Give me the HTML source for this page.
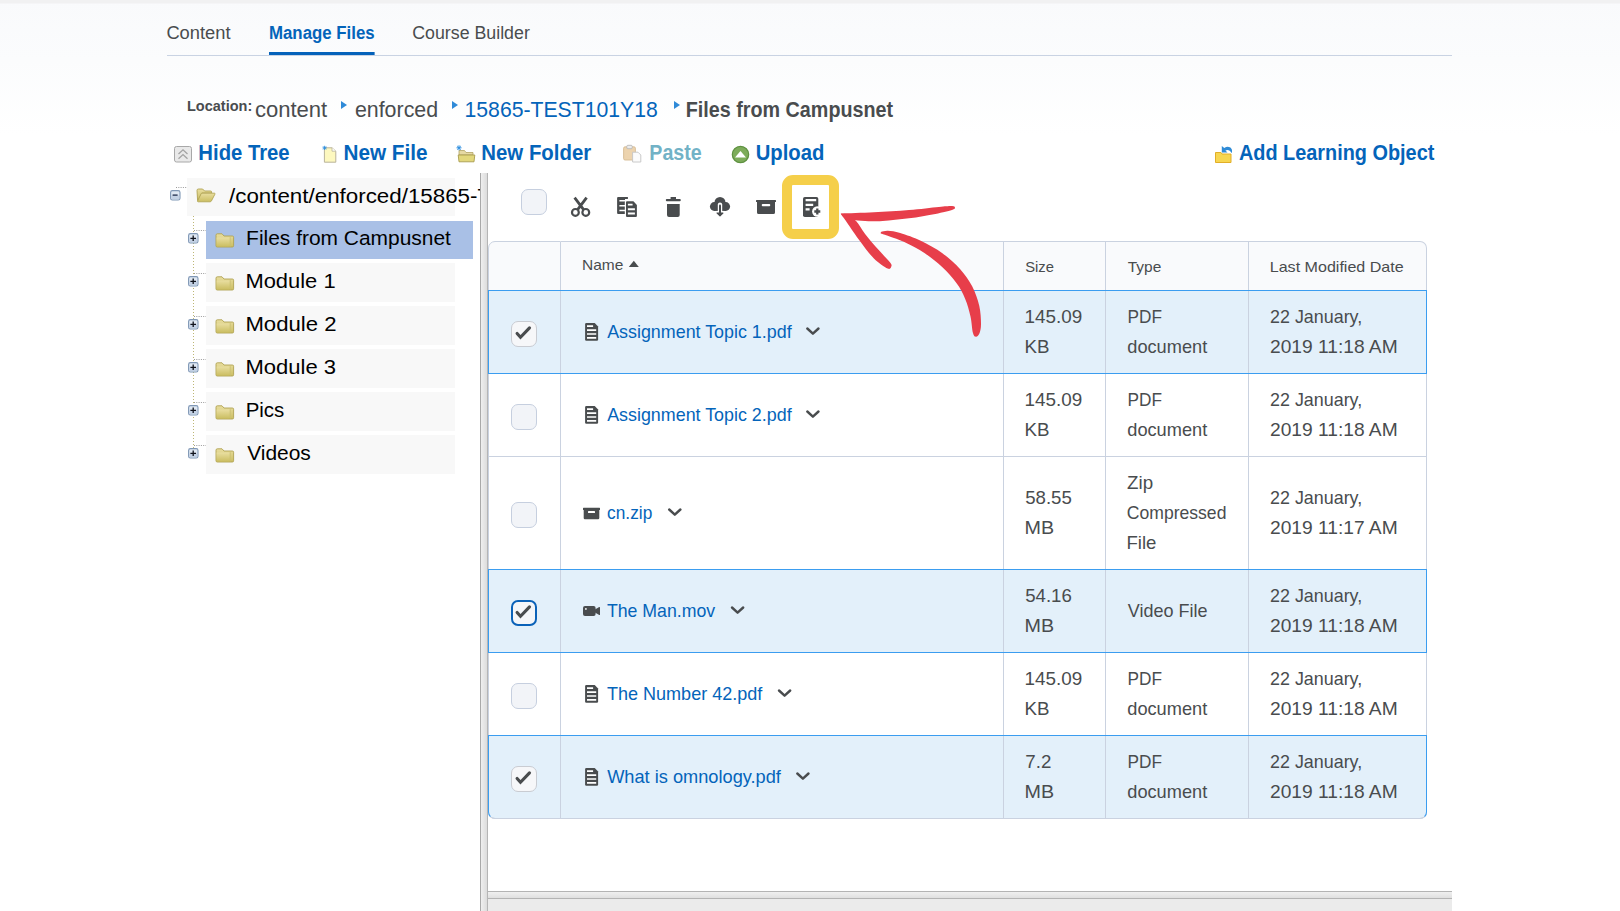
<!DOCTYPE html>
<html lang="en">
<head>
<meta charset="utf-8">
<title>Manage Files</title>
<style>
*{box-sizing:border-box;margin:0;padding:0}
html,body{width:1620px;height:911px;overflow:hidden}
body{position:relative;font-family:"Liberation Sans",sans-serif;color:#494c4e;
 background:linear-gradient(to bottom,#f9fafc 0,#fbfcfd 60px,#ffffff 135px);}
a{text-decoration:none;color:#0464ba}
.abs{position:absolute;white-space:nowrap}
#topbar{position:absolute;left:0;top:0;width:1620px;height:3px;background:#f1f1f2}
#topbar:after{content:"";position:absolute;left:0;top:3px;width:100%;height:1px;background:#f5f5f7}

/* tabs */
#tabs{position:absolute;left:167px;top:4px;width:1285px;height:52px;border-bottom:1px solid #c9d3e3}
#tabs a{position:absolute;top:16px;font-size:18px;line-height:26px;color:#494c4e;white-space:nowrap}
#tabs a.sel{color:#0464ba;font-weight:bold}
#tabs a.sel:after{content:"";position:absolute;left:0;right:0;top:32px;height:3px;background:#0562ba}

/* breadcrumb */
#crumbs{position:absolute;left:0;top:90px;width:1000px;height:40px}
#crumbs .lbl{font-size:15px;font-weight:bold;line-height:20px}
#crumbs .c{font-size:21.6px;line-height:30px}
#crumbs .sep{position:absolute;width:0;height:0;border-left:6.5px solid #2f8ad8;border-top:4.7px solid transparent;border-bottom:4.7px solid transparent;top:10.6px}

/* action bar */
#actions{position:absolute;left:0;top:138px;width:1620px;height:32px}
#actions a{font-size:21.4px;font-weight:bold;line-height:30px;margin-top:0.3px}
#actions a.dis{color:#72b2c6}
#actions svg{position:absolute}

/* tree */
#tree{position:absolute;left:160px;top:173px;width:320px;height:738px;overflow:hidden;color:#000}
#tree ul{list-style:none}
#tree .row{position:absolute;height:38px;background:#f8f8f8}
#tree .row.sel{background:#a9c0e6}
#tree .lab{position:absolute;z-index:2;font-size:20.5px;line-height:38px;white-space:nowrap;top:0}
#tree svg{position:absolute;z-index:2}

/* splitters */
#vsplit{position:absolute;left:480px;top:173px;width:8px;height:738px;border-left:1px solid #a9a9a9;border-right:1px solid #b5b5b5;background:linear-gradient(to right,#efefef,#dcdcdc)}
#hsplit{position:absolute;left:488px;top:891px;width:964px;height:20px;background:#ebebeb;border-top:1px solid #b4b4b4}
#hsplit:before{content:"";position:absolute;left:0;right:0;top:0;height:6px;background:linear-gradient(to bottom,#f0f0f0,#e0e0e0)}
#hsplit:after{content:"";position:absolute;left:0;right:0;top:6px;height:1px;background:#b4b4b4}

/* toolbar */
#tools{position:absolute;left:488px;top:173px;width:964px;height:68px}
#tools svg{position:absolute}
.cb{position:absolute;width:26px;height:26px;border:1px solid #c6cfdf;border-radius:7px;background:#f2f4f8}
.cb.on{border-color:#c9ccd2;background:#f6f7f9}
.cb.focus{border:2px solid #0b62b8;background:#f4f6f9}
.cb svg{position:absolute;left:0;top:0}
#hl{position:absolute;left:782px;top:175px;width:57px;height:64px;border:10px solid #f5cf4a;border-radius:11px}

/* table */
#files{position:absolute;left:488px;top:241px;width:939px;border-collapse:separate;border-spacing:0;font-size:17.7px;line-height:30px;table-layout:fixed}
#files th,#files td{border-right:1px solid #cad2e0;border-bottom:1px solid #cad2e0;text-align:left;font-weight:normal;vertical-align:middle;padding:0 0 0 22px;position:relative}
#files th span{position:relative;top:0.8px}#files th #h1{top:-0.8px}
#files th{background:#f9fafc;height:50px;font-size:15px;border-top:1px solid #cad2e0;line-height:20px}
#files tr>*:first-child{border-left:1px solid #cad2e0;padding:0}
#files th:first-child{border-top-left-radius:7px}
#files th:last-child{border-top-right-radius:7px}
#files tr:last-child td:first-child{border-bottom-left-radius:7px}
#files tr:last-child td:last-child{border-bottom-right-radius:7px}
#files td{height:83px;background:#fff}
#files tr.tall td{height:113px}
#files tr.on td{background:#e3f0fa}
#files td .f{position:relative;top:-0.2px}
#files .nm{position:relative;top:0.2px;display:inline-block;white-space:nowrap;font-size:17.8px}
#files .nm svg{position:absolute}
.selbox{position:absolute;left:488px;width:939px;border:1px solid #3b9df0;pointer-events:none}
.f{display:inline-block;transform-origin:0 50%;white-space:nowrap}
/*FIT*/
#t1{transform:translateX(-0.60px) scaleX(1.0169)}
#t2{transform:translateX(0.00px) scaleX(0.9347)}
#t3{transform:translateX(-0.75px) scaleX(0.9873)}
#b0{transform:translateX(-1.00px) scaleX(0.9667)}
#b1{transform:translateX(-1.10px) scaleX(1.0214)}
#b2{transform:translateX(-1.10px) scaleX(0.9902)}
#b3{transform:translateX(-1.50px) scaleX(0.9820)}
#b4{transform:translateX(-1.25px) scaleX(0.9144)}
#a1{transform:translateX(-1.65px) scaleX(0.9479)}
#a2{transform:translateX(-1.60px) scaleX(0.9698)}
#a3{transform:translateX(-1.70px) scaleX(0.9533)}
#a4{transform:translateX(-1.70px) scaleX(0.9178)}
#a5{transform:translateX(-1.30px) scaleX(0.9470)}
#a6{transform:translateX(-1.00px) scaleX(0.9284)}
#r1{transform:translateX(-1.90px) scaleX(1.0214)}
#r2{transform:translateX(-2.60px) scaleX(1.0693)}
#r3{transform:translateX(-2.60px) scaleX(1.0798)}
#r4{transform:translateX(-2.60px) scaleX(1.0746)}
#r5{transform:translateX(-2.35px) scaleX(0.9973)}
#r6{transform:translateX(-0.85px) scaleX(1.0212)}
#h1{transform:translateX(-1.00px) scaleX(1.0329)}
#h2{transform:translateX(-0.80px) scaleX(0.9875)}
#h3{transform:translateX(-0.25px) scaleX(1.0317)}
#h4{transform:translateX(-1.25px) scaleX(1.0710)}
#n1{transform:translateX(24.15px) scaleX(1.0052)}
#n2{transform:translateX(24.15px) scaleX(1.0052)}
#n3{transform:translateX(24.10px) scaleX(0.9719)}
#n4{transform:translateX(23.90px) scaleX(0.9963)}
#n5{transform:translateX(23.90px) scaleX(1.0147)}
#n6{transform:translateX(24.15px) scaleX(1.0242)}
#s1a{transform:translateX(-1.55px) scaleX(1.0664)}
#s2a{transform:translateX(-1.55px) scaleX(1.0664)}
#s5a{transform:translateX(-1.55px) scaleX(1.0664)}
#s6a{transform:translateX(-0.65px) scaleX(1.0594)}
#s1b{transform:translateX(-1.40px) scaleX(1.0588)}
#s2b{transform:translateX(-1.40px) scaleX(1.0588)}
#s5b{transform:translateX(-1.40px) scaleX(1.0588)}
#s3a{transform:translateX(-0.80px) scaleX(1.0538)}
#s4a{transform:translateX(-0.80px) scaleX(1.0538)}
#s3b{transform:translateX(-1.40px) scaleX(1.1147)}
#s4b{transform:translateX(-1.40px) scaleX(1.1147)}
#s6b{transform:translateX(-1.40px) scaleX(1.1147)}
#y1a{transform:translateX(-0.50px) scaleX(0.9744)}
#y1b{transform:translateX(-0.75px) scaleX(1.0293)}
#y2a{transform:translateX(-0.50px) scaleX(0.9744)}
#y2b{transform:translateX(-0.75px) scaleX(1.0293)}
#y5a{transform:translateX(-0.50px) scaleX(0.9744)}
#y5b{transform:translateX(-0.75px) scaleX(1.0293)}
#y6a{transform:translateX(-0.50px) scaleX(0.9744)}
#y6b{transform:translateX(-0.75px) scaleX(1.0293)}
#y3a{transform:translateX(-0.95px) scaleX(1.0603)}
#y3b{transform:translateX(-1.20px) scaleX(0.9934)}
#y3c{transform:translateX(-1.50px) scaleX(1.0514)}
#y4a{transform:translateX(-0.25px) scaleX(1.0175)}
#d1a{transform:translateX(-1.00px) scaleX(1.0119)}
#d1b{transform:translateX(-1.00px) scaleX(1.0846)}
#d2a{transform:translateX(-1.00px) scaleX(1.0119)}
#d2b{transform:translateX(-1.00px) scaleX(1.0846)}
#d3a{transform:translateX(-1.00px) scaleX(1.0119)}
#d3b{transform:translateX(-1.00px) scaleX(1.0846)}
#d4a{transform:translateX(-1.00px) scaleX(1.0119)}
#d4b{transform:translateX(-1.00px) scaleX(1.0846)}
#d5a{transform:translateX(-1.00px) scaleX(1.0119)}
#d5b{transform:translateX(-1.00px) scaleX(1.0846)}
#d6a{transform:translateX(-1.00px) scaleX(1.0119)}
#d6b{transform:translateX(-1.00px) scaleX(1.0846)}
/*ENDFIT*/
</style>
</head>
<body>
<div id="topbar"></div>

<nav id="tabs">
 <a class="f" id="t1" style="left:0px">Content</a>
 <a id="t2" class="f sel" style="left:102px">Manage Files</a>
 <a class="f" id="t3" style="left:246px">Course Builder</a>
</nav>

<div id="crumbs">
 <span id="b0" class="f abs lbl" style="left:188px;top:6.4px">Location:</span>
 <span id="b1" class="f abs c" style="left:256px;top:4.8px">content</span>
 <i class="sep" style="left:341px"></i>
 <span id="b2" class="f abs c" style="left:356px;top:4.8px">enforced</span>
 <i class="sep" style="left:452px"></i>
 <a id="b3" class="f abs c" style="left:466px;top:4.8px">15865-TEST101Y18</a>
 <i class="sep" style="left:674px"></i>
 <span id="b4" class="f abs c" style="left:687px;top:4.8px;font-weight:bold">Files from Campusnet</span>
</div>

<div id="actions">
 
 <svg style="left:174px;top:8px" width="18" height="17" viewBox="0 0 18 17"><rect x="0.5" y="0.5" width="17" height="15.5" rx="2" fill="#e9e9e9" stroke="#a8a8a8"/><path d="M4.5 8 L9 3.8 L13.5 8 M4.5 12.8 L9 8.6 L13.5 12.8" fill="none" stroke="#a3a3a3" stroke-width="1.3"/></svg>
 <svg style="left:321px;top:7px" width="16" height="18" viewBox="0 0 16 18"><path d="M3.4 2.8 H11 L14.8 6.2 V17.2 H3.4 Z" fill="#fdf8bf" stroke="#b9b39a" stroke-width="1"/><path d="M11 2.8 V6.2 H14.8" fill="#fff" stroke="#b9b39a" stroke-width="0.8"/><path d="M3.6 0.8 V5 M1.5 2.9 H5.7 M2.1 1.4 L5.1 4.4 M5.1 1.4 L2.1 4.4" stroke="#2f8fe0" stroke-width="0.9"/></svg>
 <svg style="left:456px;top:7px" width="20" height="18" viewBox="0 0 20 18"><path d="M3 5.5 H8.5 L10 7.5 H17 V10 H3 Z" fill="#e6d9a3" stroke="#b3a565" stroke-width="0.8"/><path d="M2.2 10 H18.8 L18 16.8 H3 Z" fill="#e2d77c" stroke="#a89c4e" stroke-width="0.9"/><path d="M3 0.3 V5.3 M0.5 2.8 H5.5 M1.2 1 L4.8 4.6 M4.8 1 L1.2 4.6" stroke="#2f8fe0" stroke-width="1"/></svg>
 <svg style="left:622px;top:6px" width="20" height="19" viewBox="0 0 20 19"><rect x="1.6" y="2.8" width="11.8" height="13.2" rx="1.5" fill="#ecd3ae" stroke="#d6bb93" stroke-width="0.9"/><rect x="4.8" y="1.3" width="5.4" height="3.4" rx="1" fill="#ececec" stroke="#b3b3b3" stroke-width="0.8"/><path d="M10.6 8.2 H16 L18.8 11 V18 H10.6 Z" fill="#fbfbfb" stroke="#c4c4c4" stroke-width="0.9"/></svg>
 <svg style="left:731px;top:7px" width="19" height="19" viewBox="0 0 19 19"><circle cx="9.5" cy="9.5" r="8.2" fill="#7dac5a" stroke="#5e9140" stroke-width="1.2"/><path d="M4 12.5 L9.5 6 L15 12.5 Z" fill="#fff"/></svg>
 <svg style="left:1214px;top:7px" width="20" height="19" viewBox="0 0 20 19"><path d="M1.5 7.5 H7 L8 9 H17 V17.5 H1.5 Z" fill="#f7d650" stroke="#e2ae27" stroke-width="1"/><path d="M7.8 1 V7.6 H13.5 L11.4 5.6 C13.5 4.3 16 5 17.6 8.3 C19.6 3.5 15 0 10.3 2.9 Z" fill="#2f8bd6"/></svg>
 <a id="a1" class="f abs" style="left:200px;top:0">Hide Tree</a>
 <a id="a2" class="f abs" style="left:345px;top:0">New File</a>
 <a id="a3" class="f abs" style="left:483px;top:0">New Folder</a>
 <a id="a4" class="f abs dis" style="left:651px;top:0">Paste</a>
 <a id="a5" class="f abs" style="left:757px;top:0">Upload</a>
 <a id="a6" class="f abs" style="left:1240px;top:0">Add Learning Object</a>
</div>

<svg width="0" height="0" style="position:absolute"><defs><linearGradient id="fg" x1="0" y1="0" x2="0" y2="1"><stop offset="0" stop-color="#e9dea0"/><stop offset="1" stop-color="#cbbe62"/></linearGradient></defs></svg>
<div id="tree">
 <svg style="left:0;top:0" width="320" height="738" viewBox="0 0 320 738" fill="none"><path d="M16 14.5 H27" stroke="#9a9a9a" stroke-width="1" stroke-dasharray="1 1.3"/><path d="M33.5 43 V281" stroke="#bdb675" stroke-width="1" stroke-dasharray="1 2"/><path d="M34 57.5 H46" stroke="#9a9a9a" stroke-width="1" stroke-dasharray="1 1.3"/><path d="M34 100.5 H46" stroke="#9a9a9a" stroke-width="1" stroke-dasharray="1 1.3"/><path d="M34 143.5 H46" stroke="#9a9a9a" stroke-width="1" stroke-dasharray="1 1.3"/><path d="M34 186.5 H46" stroke="#9a9a9a" stroke-width="1" stroke-dasharray="1 1.3"/><path d="M34 229.5 H46" stroke="#9a9a9a" stroke-width="1" stroke-dasharray="1 1.3"/><path d="M34 272.5 H46" stroke="#9a9a9a" stroke-width="1" stroke-dasharray="1 1.3"/></svg>
<svg style="left:10px;top:17px" width="11" height="11" viewBox="0 0 11 11"><rect x="0.6" y="0.6" width="9.4" height="9.4" rx="1.8" fill="#dfe8f3" stroke="#7f97b5" stroke-width="1.1"/><rect x="1.4" y="5.3" width="7.8" height="3.9" rx="1" fill="#c3d1e4"/><path d="M2.6 5.1 H7.6" stroke="#1c2a4a" stroke-width="1.3"/></svg><svg style="left:36px;top:15px" width="20" height="15" viewBox="0 0 20 15"><path d="M1 2.4 Q1 1 2.4 1 H6.6 L8.6 3 H14.6 Q15.6 3 15.6 4 V5 H6 L1.6 12.6 Z" fill="url(#fg)" stroke="#b0a352" stroke-width="0.9"/><path d="M5.4 5.2 H18.4 Q19.4 5.2 18.9 6.2 L15.4 13 Q15 13.8 14 13.8 H2.2 Q1.2 13.8 1.7 12.8 Z" fill="url(#fg)" stroke="#b3a757" stroke-width="0.9"/></svg><svg style="left:28px;top:60px" width="11" height="11" viewBox="0 0 11 11"><rect x="0.6" y="0.6" width="9.4" height="9.4" rx="1.8" fill="#dfe8f3" stroke="#7f97b5" stroke-width="1.1"/><rect x="1.4" y="5.3" width="7.8" height="3.9" rx="1" fill="#c3d1e4"/><path d="M2.4 5.3 H8 M5.2 2.5 V8.1" stroke="#10131c" stroke-width="1.3"/></svg><svg style="left:55px;top:60px" width="20" height="15" viewBox="0 0 20 15"><path d="M1 2.2 Q1 0.8 2.4 0.8 H7 L9 3 H17.4 Q18.6 3 18.6 4.2 V12.8 Q18.6 14 17.4 14 H2.2 Q1 14 1 12.8 Z" fill="url(#fg)" stroke="#b0a352" stroke-width="0.9"/><path d="M1.6 4.6 H14.5 V13.5 H2.2 Q1.6 13.5 1.6 12.8 Z" fill="url(#fg)"/><path d="M15.3 4.2 V13.6" stroke="#c9be72" stroke-width="0.7"/></svg><svg style="left:28px;top:103px" width="11" height="11" viewBox="0 0 11 11"><rect x="0.6" y="0.6" width="9.4" height="9.4" rx="1.8" fill="#dfe8f3" stroke="#7f97b5" stroke-width="1.1"/><rect x="1.4" y="5.3" width="7.8" height="3.9" rx="1" fill="#c3d1e4"/><path d="M2.4 5.3 H8 M5.2 2.5 V8.1" stroke="#10131c" stroke-width="1.3"/></svg><svg style="left:55px;top:103px" width="20" height="15" viewBox="0 0 20 15"><path d="M1 2.2 Q1 0.8 2.4 0.8 H7 L9 3 H17.4 Q18.6 3 18.6 4.2 V12.8 Q18.6 14 17.4 14 H2.2 Q1 14 1 12.8 Z" fill="url(#fg)" stroke="#b0a352" stroke-width="0.9"/><path d="M1.6 4.6 H14.5 V13.5 H2.2 Q1.6 13.5 1.6 12.8 Z" fill="url(#fg)"/><path d="M15.3 4.2 V13.6" stroke="#c9be72" stroke-width="0.7"/></svg><svg style="left:28px;top:146px" width="11" height="11" viewBox="0 0 11 11"><rect x="0.6" y="0.6" width="9.4" height="9.4" rx="1.8" fill="#dfe8f3" stroke="#7f97b5" stroke-width="1.1"/><rect x="1.4" y="5.3" width="7.8" height="3.9" rx="1" fill="#c3d1e4"/><path d="M2.4 5.3 H8 M5.2 2.5 V8.1" stroke="#10131c" stroke-width="1.3"/></svg><svg style="left:55px;top:146px" width="20" height="15" viewBox="0 0 20 15"><path d="M1 2.2 Q1 0.8 2.4 0.8 H7 L9 3 H17.4 Q18.6 3 18.6 4.2 V12.8 Q18.6 14 17.4 14 H2.2 Q1 14 1 12.8 Z" fill="url(#fg)" stroke="#b0a352" stroke-width="0.9"/><path d="M1.6 4.6 H14.5 V13.5 H2.2 Q1.6 13.5 1.6 12.8 Z" fill="url(#fg)"/><path d="M15.3 4.2 V13.6" stroke="#c9be72" stroke-width="0.7"/></svg><svg style="left:28px;top:189px" width="11" height="11" viewBox="0 0 11 11"><rect x="0.6" y="0.6" width="9.4" height="9.4" rx="1.8" fill="#dfe8f3" stroke="#7f97b5" stroke-width="1.1"/><rect x="1.4" y="5.3" width="7.8" height="3.9" rx="1" fill="#c3d1e4"/><path d="M2.4 5.3 H8 M5.2 2.5 V8.1" stroke="#10131c" stroke-width="1.3"/></svg><svg style="left:55px;top:189px" width="20" height="15" viewBox="0 0 20 15"><path d="M1 2.2 Q1 0.8 2.4 0.8 H7 L9 3 H17.4 Q18.6 3 18.6 4.2 V12.8 Q18.6 14 17.4 14 H2.2 Q1 14 1 12.8 Z" fill="url(#fg)" stroke="#b0a352" stroke-width="0.9"/><path d="M1.6 4.6 H14.5 V13.5 H2.2 Q1.6 13.5 1.6 12.8 Z" fill="url(#fg)"/><path d="M15.3 4.2 V13.6" stroke="#c9be72" stroke-width="0.7"/></svg><svg style="left:28px;top:232px" width="11" height="11" viewBox="0 0 11 11"><rect x="0.6" y="0.6" width="9.4" height="9.4" rx="1.8" fill="#dfe8f3" stroke="#7f97b5" stroke-width="1.1"/><rect x="1.4" y="5.3" width="7.8" height="3.9" rx="1" fill="#c3d1e4"/><path d="M2.4 5.3 H8 M5.2 2.5 V8.1" stroke="#10131c" stroke-width="1.3"/></svg><svg style="left:55px;top:232px" width="20" height="15" viewBox="0 0 20 15"><path d="M1 2.2 Q1 0.8 2.4 0.8 H7 L9 3 H17.4 Q18.6 3 18.6 4.2 V12.8 Q18.6 14 17.4 14 H2.2 Q1 14 1 12.8 Z" fill="url(#fg)" stroke="#b0a352" stroke-width="0.9"/><path d="M1.6 4.6 H14.5 V13.5 H2.2 Q1.6 13.5 1.6 12.8 Z" fill="url(#fg)"/><path d="M15.3 4.2 V13.6" stroke="#c9be72" stroke-width="0.7"/></svg><svg style="left:28px;top:275px" width="11" height="11" viewBox="0 0 11 11"><rect x="0.6" y="0.6" width="9.4" height="9.4" rx="1.8" fill="#dfe8f3" stroke="#7f97b5" stroke-width="1.1"/><rect x="1.4" y="5.3" width="7.8" height="3.9" rx="1" fill="#c3d1e4"/><path d="M2.4 5.3 H8 M5.2 2.5 V8.1" stroke="#10131c" stroke-width="1.3"/></svg><svg style="left:55px;top:275px" width="20" height="15" viewBox="0 0 20 15"><path d="M1 2.2 Q1 0.8 2.4 0.8 H7 L9 3 H17.4 Q18.6 3 18.6 4.2 V12.8 Q18.6 14 17.4 14 H2.2 Q1 14 1 12.8 Z" fill="url(#fg)" stroke="#b0a352" stroke-width="0.9"/><path d="M1.6 4.6 H14.5 V13.5 H2.2 Q1.6 13.5 1.6 12.8 Z" fill="url(#fg)"/><path d="M15.3 4.2 V13.6" stroke="#c9be72" stroke-width="0.7"/></svg>
 <ul>
  <li><div class="row" style="left:27px;top:5px;width:268px"></div><span id="r0" class="f lab" style="left:68.8px;top:4px;transform:scaleX(1.09)">/content/enforced/15865-TEST101Y18</span>
   <ul>
    <li><div class="row sel" style="left:46px;top:48px;width:267px"></div><span id="r1" class="f lab" style="left:88px;top:46.4px">Files from Campusnet</span></li>
    <li><div class="row" style="left:46px;top:90px;width:249px;height:39px"></div><span id="r2" class="f lab" style="left:88px;top:89.4px">Module 1</span></li>
    <li><div class="row" style="left:46px;top:133px;width:249px;height:39px"></div><span id="r3" class="f lab" style="left:88px;top:132.4px">Module 2</span></li>
    <li><div class="row" style="left:46px;top:176px;width:249px;height:39px"></div><span id="r4" class="f lab" style="left:88px;top:175.4px">Module 3</span></li>
    <li><div class="row" style="left:46px;top:219px;width:249px;height:39px"></div><span id="r5" class="f lab" style="left:88px;top:218.4px">Pics</span></li>
    <li><div class="row" style="left:46px;top:262px;width:249px;height:39px"></div><span id="r6" class="f lab" style="left:88px;top:261.4px">Videos</span></li>
   </ul>
  </li>
 </ul>
</div>

<div id="vsplit"></div>

<div id="tools">
 <span class="cb" style="left:33px;top:16px"></span>
 <svg style="left:82px;top:23px" width="22" height="22" viewBox="0 0 22 22"><g fill="none" stroke="#494c4e"><circle cx="5.4" cy="16.4" r="3.4" stroke-width="2.2"/><circle cx="15.8" cy="16.4" r="3.4" stroke-width="2.2"/><path d="M7.6 13.6 L16.6 1.6 M13.6 13.6 L4.6 1.6" stroke-width="2.8"/></g></svg>
 <svg style="left:128px;top:23px" width="22" height="22" viewBox="0 0 22 22"><path d="M2.1 0.9 H11.9 V3 H9 V17.9 H2.1 Q1.1 17.9 1.1 16.9 V1.9 Q1.1 0.9 2.1 0.9 Z" fill="#494c4e"/><path d="M3.4 4.7 H9 M3.4 9.7 H9 M3.4 14.4 H9" stroke="#fff" stroke-width="1.5"/><path d="M10 6.2 Q10 5.2 11 5.2 H17.4 L20.9 9 V19.9 Q20.9 20.9 19.9 20.9 H11 Q10 20.9 10 19.9 Z" fill="#494c4e" stroke="#fff" stroke-width="2.4" paint-order="stroke"/><path d="M11.9 8.6 H16.6 M11.9 13.2 H18.9 M11.9 17.5 H18.9" stroke="#fff" stroke-width="1.9"/></svg>
 <svg style="left:177px;top:23px" width="17" height="22" viewBox="0 0 17 22"><path d="M5.6 1 H11 V3 H5.6 Z M1.8 2.9 H14.8 Q15.8 2.9 15.8 3.9 Q15.8 5.2 14.8 5.2 H1.8 Q0.8 5.2 0.8 3.9 Q0.8 2.9 1.8 2.9 Z M2 8 H14.7 V19 Q14.7 21 12.7 21 H4 Q2 21 2 19 Z" fill="#494c4e"/></svg>
 <svg style="left:221px;top:23px" width="22" height="22" viewBox="0 0 22 22"><circle cx="5.3" cy="10.5" r="4.4" fill="#494c4e"/><circle cx="16.7" cy="10.5" r="4.4" fill="#494c4e"/><circle cx="11" cy="6.5" r="5.5" fill="#494c4e"/><rect x="5" y="9" width="12" height="5.9" fill="#494c4e"/><path d="M11 8.6 V16.5" stroke="#fff" stroke-width="4.4" stroke-linecap="round"/><path d="M11 9.4 V17" stroke="#494c4e" stroke-width="2" stroke-linecap="round"/><path d="M8.1 17 H13.9 L11 19.9 Z" fill="#494c4e" stroke="#494c4e" stroke-width="1.2" stroke-linejoin="round"/></svg>
 <svg style="left:267px;top:26px" width="22" height="16" viewBox="0 0 22 16"><path d="M1.6 1 H20.4 Q21 1 21 1.6 V2.4 Q21 3 20.4 3 H20 V13.4 Q20 15 18.4 15 H3.6 Q2 15 2 13.4 V3 H1.6 Q1 3 1 2.4 V1.6 Q1 1 1.6 1 Z" fill="#494c4e"/><rect x="6.8" y="4.9" width="8.4" height="2.3" rx="0.8" fill="#fff"/></svg>
 <svg style="left:314px;top:23px" width="21" height="22" viewBox="0 0 21 22"><rect x="1" y="1" width="15.3" height="20" rx="1.8" fill="#494c4e"/><path d="M3.6 4.1 H14.2 M3.6 8.9 H11.2 M3.6 13.3 H7.6" stroke="#fff" stroke-width="2.3"/><circle cx="15.3" cy="15.5" r="5.2" fill="#fff"/><path d="M12.3 15.5 H18.3 M15.3 12.5 V18.5" stroke="#494c4e" stroke-width="2.3"/></svg>

</div>
<div id="hl"></div>

<table id="files">
 <colgroup><col style="width:73px"><col style="width:443px"><col style="width:102px"><col style="width:143px"><col style="width:178px"></colgroup>
 <thead>
  <tr><th></th><th><span class="f" id="h1">Name</span></th><th><span class="f" id="h2">Size</span></th><th><span class="f" id="h3">Type</span></th><th><span class="f" id="h4">Last Modified Date</span></th></tr>
 </thead>
 <tbody>
  <tr class="on"><td><span class="cb on" style="left:22px;top:30px"></span></td><td><a class="f nm" id="n1">Assignment Topic 1.pdf</a></td><td><span class="f" id="s1a">145.09</span><br><span class="f" id="s1b">KB</span></td><td><span class="f" id="y1a">PDF</span><br><span class="f" id="y1b">document</span></td><td><span class="f" id="d1a">22 January,</span><br><span class="f" id="d1b">2019 11:18 AM</span></td></tr>
  <tr><td><span class="cb" style="left:22px;top:30px"></span></td><td><a class="f nm" id="n2">Assignment Topic 2.pdf</a></td><td><span class="f" id="s2a">145.09</span><br><span class="f" id="s2b">KB</span></td><td><span class="f" id="y2a">PDF</span><br><span class="f" id="y2b">document</span></td><td><span class="f" id="d2a">22 January,</span><br><span class="f" id="d2b">2019 11:18 AM</span></td></tr>
  <tr class="tall"><td><span class="cb" style="left:22px;top:45px"></span></td><td><a class="f nm" id="n3">cn.zip</a></td><td><span class="f" id="s3a">58.55</span><br><span class="f" id="s3b">MB</span></td><td><span class="f" id="y3a">Zip</span><br><span class="f" id="y3b">Compressed</span><br><span class="f" id="y3c">File</span></td><td><span class="f" id="d3a">22 January,</span><br><span class="f" id="d3b">2019 11:17 AM</span></td></tr>
  <tr class="on"><td><span class="cb focus" style="left:22px;top:30px"></span></td><td><a class="f nm" id="n4">The Man.mov</a></td><td><span class="f" id="s4a">54.16</span><br><span class="f" id="s4b">MB</span></td><td><span class="f" id="y4a">Video File</span></td><td><span class="f" id="d4a">22 January,</span><br><span class="f" id="d4b">2019 11:18 AM</span></td></tr>
  <tr><td><span class="cb" style="left:22px;top:30px"></span></td><td><a class="f nm" id="n5">The Number 42.pdf</a></td><td><span class="f" id="s5a">145.09</span><br><span class="f" id="s5b">KB</span></td><td><span class="f" id="y5a">PDF</span><br><span class="f" id="y5b">document</span></td><td><span class="f" id="d5a">22 January,</span><br><span class="f" id="d5b">2019 11:18 AM</span></td></tr>
  <tr class="on"><td><span class="cb on" style="left:22px;top:30px"></span></td><td><a class="f nm" id="n6">What is omnology.pdf</a></td><td><span class="f" id="s6a">7.2</span><br><span class="f" id="s6b">MB</span></td><td><span class="f" id="y6a">PDF</span><br><span class="f" id="y6b">document</span></td><td><span class="f" id="d6a">22 January,</span><br><span class="f" id="d6b">2019 11:18 AM</span></td></tr>
 </tbody>
</table>
<div class="selbox" style="top:290px;height:84px"></div>
<div class="selbox" style="top:569px;height:84px"></div>
<div class="selbox" style="top:735px;height:84px;border-bottom-color:#cad2e0;border-radius:0 0 7px 7px"></div>

<svg id="ticons" style="position:absolute;left:0;top:0;pointer-events:none" width="1620" height="911" viewBox="0 0 1620 911"><g transform="translate(585.1 323.1)"><path d="M1.2 0 H9.6 L13 3.5 V16.4 Q13 17.6 11.8 17.6 H1.2 Q0 17.6 0 16.4 V1.2 Q0 0 1.2 0 Z" fill="#494c4e"/><path d="M1.9 3.1 H8 M1.9 7 H11.1 M1.9 10.9 H11.1 M1.9 14.8 H11.1" stroke="#fff" stroke-width="1.7"/></g><g transform="translate(585.1 406.1)"><path d="M1.2 0 H9.6 L13 3.5 V16.4 Q13 17.6 11.8 17.6 H1.2 Q0 17.6 0 16.4 V1.2 Q0 0 1.2 0 Z" fill="#494c4e"/><path d="M1.9 3.1 H8 M1.9 7 H11.1 M1.9 10.9 H11.1 M1.9 14.8 H11.1" stroke="#fff" stroke-width="1.7"/></g><g transform="translate(583 507.8)"><path d="M0.5 0 H16.5 Q17 0 17 0.5 V1.6 Q17 2.1 16.5 2.1 H16.3 V10.3 Q16.3 11.5 15.1 11.5 H1.9 Q0.7 11.5 0.7 10.3 V2.1 H0.5 Q0 2.1 0 1.6 V0.5 Q0 0 0.5 0 Z" fill="#494c4e"/><rect x="5" y="3.3" width="7" height="1.9" rx="0.6" fill="#fff"/></g><g transform="translate(583 606.0)"><rect x="0" y="0" width="12.6" height="10" rx="2" fill="#494c4e"/><path d="M12 3.6 L16.2 1 Q17 0.6 17 1.5 V8.5 Q17 9.4 16.2 9 L12 6.4 Z" fill="#494c4e"/><circle cx="2.9" cy="2.9" r="0.9" fill="#fff"/></g><g transform="translate(585.1 685.1)"><path d="M1.2 0 H9.6 L13 3.5 V16.4 Q13 17.6 11.8 17.6 H1.2 Q0 17.6 0 16.4 V1.2 Q0 0 1.2 0 Z" fill="#494c4e"/><path d="M1.9 3.1 H8 M1.9 7 H11.1 M1.9 10.9 H11.1 M1.9 14.8 H11.1" stroke="#fff" stroke-width="1.7"/></g><g transform="translate(585.1 768.1)"><path d="M1.2 0 H9.6 L13 3.5 V16.4 Q13 17.6 11.8 17.6 H1.2 Q0 17.6 0 16.4 V1.2 Q0 0 1.2 0 Z" fill="#494c4e"/><path d="M1.9 3.1 H8 M1.9 7 H11.1 M1.9 10.9 H11.1 M1.9 14.8 H11.1" stroke="#fff" stroke-width="1.7"/></g><path d="M807.3 328.5 L812.9 333.7 L818.5 328.5" fill="none" stroke="#494c4e" stroke-width="2.4" stroke-linecap="round" stroke-linejoin="round"/><path d="M807.3 411.5 L812.9 416.7 L818.5 411.5" fill="none" stroke="#494c4e" stroke-width="2.4" stroke-linecap="round" stroke-linejoin="round"/><path d="M669.2 509.5 L674.8 514.7 L680.4 509.5" fill="none" stroke="#494c4e" stroke-width="2.4" stroke-linecap="round" stroke-linejoin="round"/><path d="M732.0 607.5 L737.6 612.7 L743.2 607.5" fill="none" stroke="#494c4e" stroke-width="2.4" stroke-linecap="round" stroke-linejoin="round"/><path d="M779.0 690.5 L784.6 695.7 L790.2 690.5" fill="none" stroke="#494c4e" stroke-width="2.4" stroke-linecap="round" stroke-linejoin="round"/><path d="M797.3 773.5 L802.9 778.7 L808.5 773.5" fill="none" stroke="#494c4e" stroke-width="2.4" stroke-linecap="round" stroke-linejoin="round"/><path d="M517.1 333.4 L520.5 337.3 L529.5 327.9" fill="none" stroke="#494c4e" stroke-width="3.1" stroke-linecap="round" stroke-linejoin="miter"/><path d="M517.1 612.4 L520.5 616.3 L529.5 606.9" fill="none" stroke="#494c4e" stroke-width="3.1" stroke-linecap="round" stroke-linejoin="miter"/><path d="M517.1 778.4 L520.5 782.3 L529.5 772.9" fill="none" stroke="#494c4e" stroke-width="3.1" stroke-linecap="round" stroke-linejoin="miter"/><path d="M628.8 267 L633.8 260.8 L638.8 267 Z" fill="#494c4e"/></svg>
<div id="hsplit"></div>
<svg id="arrow" style="position:absolute;left:0;top:0;pointer-events:none" width="1620" height="911" viewBox="0 0 1620 911" fill="#e73e4a">
<path d="M841.6 213.5C847.0 213.3 862.7 212.9 873.9 212.3C885.1 211.7 898.2 210.9 909.0 210.0C919.9 209.1 931.7 207.5 938.9 206.9C946.1 206.2 949.4 205.9 952.1 206.0C954.7 206.1 954.8 206.9 954.9 207.6C955.0 208.2 955.8 208.6 952.6 209.7C949.3 210.7 942.6 212.5 935.4 213.9C928.1 215.3 917.8 217.1 909.0 218.3C900.2 219.4 890.0 220.4 882.7 220.9C875.4 221.4 870.4 221.4 865.1 221.1C859.9 220.8 855.0 220.2 851.1 219.2C847.2 218.1 843.2 215.5 841.6 214.6C840.0 213.7 841.6 213.7 841.6 213.5Z"/>
<path d="M841.6 213.5C842.9 214.0 846.9 215.1 849.3 216.3C851.8 217.6 853.7 218.3 856.3 221.3C859.0 224.2 861.3 229.0 865.1 233.9C868.9 238.8 875.0 245.8 879.2 250.6C883.3 255.3 888.0 259.7 890.1 262.4C892.1 265.0 891.7 265.5 891.3 266.6C890.9 267.6 890.5 269.8 887.6 268.5C884.7 267.2 878.5 263.1 873.9 258.5C869.3 253.9 864.2 246.8 859.9 240.9C855.5 235.1 850.7 227.8 847.6 223.4C844.5 219.0 842.2 216.2 841.2 214.6C840.2 212.9 841.5 213.7 841.6 213.5Z"/>
<path d="M881.3 231.8C882.4 231.6 884.8 230.5 888.0 230.7C891.1 230.9 894.7 231.3 900.2 233.0C905.8 234.7 914.3 237.6 921.3 240.9C928.3 244.3 936.0 248.5 942.4 253.2C948.8 257.9 955.0 263.5 960.0 269.0C964.9 274.6 969.0 280.4 972.3 286.6C975.5 292.7 977.8 299.8 979.3 305.9C980.7 312.1 981.0 318.9 981.0 323.5C981.1 328.0 980.4 330.9 979.6 333.1C978.8 335.4 977.2 336.8 976.1 336.8C975.0 336.8 973.9 336.5 973.0 333.1C972.0 329.7 971.8 322.2 970.5 316.4C969.2 310.7 967.6 304.4 965.2 298.9C962.9 293.3 960.3 288.3 956.4 283.1C952.6 277.8 947.7 272.2 942.4 267.3C937.1 262.3 931.3 257.5 924.8 253.2C918.4 249.0 910.2 244.8 903.8 241.8C897.3 238.8 890.0 236.7 886.2 235.3C882.4 233.9 881.7 234.1 880.9 233.6C880.1 233.0 881.2 232.1 881.3 231.8Z"/>
</svg>
</body>
</html>
